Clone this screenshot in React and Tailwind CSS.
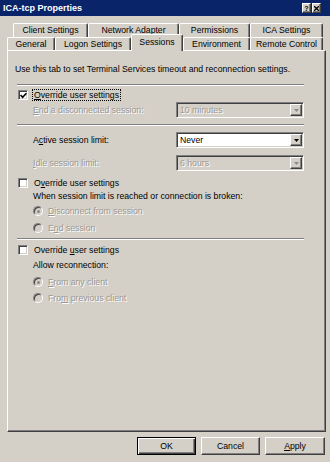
import React from "react";

const raised =
  "border border-t-white border-l-white border-r-[#404040] border-b-[#404040] shadow-[inset_-1px_-1px_0_#808080]";
const sunken =
  "border border-t-[#808080] border-l-[#808080] border-r-white border-b-white shadow-[inset_1px_1px_0_#404040,inset_-1px_-1px_0_#d4d0c8]";
const dim = "text-[#9a9894] [text-shadow:1px_1px_0_#ffffff]";

const K = ({ children }) => <span className="underline underline-offset-1">{children}</span>;

const Sep = ({ className = "" }) => (
  <div className={`h-[2px] border-t border-t-[#808080] border-b border-b-white ${className}`} />
);

const Check = ({ checked }) => (
  <div className={`flex h-[10px] w-[10px] items-center justify-center bg-white ${sunken}`}>
    {checked && (
      <svg width="7" height="7" viewBox="0 0 7 7">
        <polyline points="0.6,3 2.6,5.2 6.4,1.2" fill="none" stroke="#000" strokeWidth="1.6" />
      </svg>
    )}
  </div>
);

const Radio = ({ selected }) => (
  <div className="flex h-[10px] w-[10px] items-center justify-center rounded-full border border-t-[#808080] border-l-[#808080] border-r-white border-b-white bg-[#d4d0c8] shadow-[inset_1px_1px_0_#404040]">
    {selected && <div className="h-[3px] w-[3px] rounded-full bg-[#8a8a8a]" />}
  </div>
);

const Combo = ({ value, enabled }) => (
  <div className={`ml-auto flex h-[16px] w-[128px] items-stretch p-[1px] ${sunken} ${enabled ? "bg-white" : "bg-[#d4d0c8]"}`}>
    <span className={`flex flex-1 items-center pl-[2px] ${enabled ? "text-black" : dim}`}>{value}</span>
    <div className={`flex w-[12px] items-center justify-center bg-[#d4d0c8] ${raised}`}>
      <svg width="5" height="3" viewBox="0 0 5 3">
        <path d="M0 0h5L2.5 3z" fill={enabled ? "#000" : "#8a8a8a"} />
      </svg>
    </div>
  </div>
);

const backTabs = [
  { label: "Client Settings", w: "w-[75px]" },
  { label: "Network Adapter", w: "w-[91px]" },
  { label: "Permissions", w: "w-[71px]" },
  { label: "ICA Settings", w: "w-[73px]" },
];

const frontTabs = [
  { label: "General", w: "w-[48px]" },
  { label: "Logon Settings", w: "w-[76px]" },
  { label: "Sessions", w: "w-[52px]", active: true },
  { label: "Environment", w: "w-[67px]" },
  { label: "Remote Control", w: "w-[73px]" },
];

const tabBase =
  "flex items-center justify-center bg-[#d4d0c8] border-l border-t border-white border-r border-r-[#404040] rounded-t-[2px] shadow-[inset_-1px_0_0_#808080]";

export default function App() {
  return (
    <div className="h-[462px] w-[330px] overflow-hidden bg-[#d4d0c8] font-['Liberation_Sans',Arial,sans-serif] text-[8.7px] leading-none text-black">
      {/* Title bar */}
      <div className="flex h-[16px] items-center bg-[#0a246a] pl-[3px] pr-[9px]">
        <span className="text-[9px] font-bold text-white">ICA-tcp Properties</span>
        <div className="ml-auto flex gap-[1px]">
          <div className={`flex h-[10px] w-[9px] items-center justify-center bg-[#d4d0c8] ${raised}`}>
            <span className="text-[7px] font-bold">?</span>
          </div>
          <div className={`flex h-[10px] w-[9px] items-center justify-center bg-[#d4d0c8] ${raised}`}>
            <svg width="5" height="5" viewBox="0 0 5 5">
              <path d="M0 0L5 5M5 0L0 5" stroke="#000" strokeWidth="1.3" />
            </svg>
          </div>
        </div>
      </div>

      {/* Tabs */}
      <div className="mt-[7px] ml-[13px] flex h-[14px]">
        {backTabs.map((t) => (
          <div key={t.label} className={`${tabBase} ${t.w}`}>{t.label}</div>
        ))}
      </div>
      <div className="ml-[7px] flex h-[13px] items-end">
        {frontTabs.map((t) =>
          t.active ? (
            <div key={t.label} className={`${tabBase} ${t.w} relative z-10 -mb-[1px] h-[17px] pb-[2px]`}>
              {t.label}
            </div>
          ) : (
            <div key={t.label} className={`${tabBase} ${t.w} h-[13px]`}>{t.label}</div>
          )
        )}
      </div>

      {/* Panel */}
      <div className="ml-[7px] h-[382px] w-[319px] border-l border-t border-white border-r border-b border-r-[#404040] border-b-[#404040] shadow-[inset_-1px_-1px_0_#808080]">
        <div className="pl-[9px] pr-[21px] pt-[12px]">
          <div className="-ml-[2px] flex h-[12px] items-center">
            Use this tab to set Terminal Services timeout and reconnection settings.
          </div>
          <Sep className="mt-[9px]" />

          <div className="mt-[3px] flex h-[12px] items-center">
            <div className="ml-[1px]"><Check checked /></div>
            <span className="ml-[4px] border border-dotted border-black px-[1px] py-[1px]">
              <K>O</K>verride user settings
            </span>
          </div>
          <div className="mt-[1px] flex h-[16px] items-center pl-[16px]">
            <span className={dim}><K>E</K>nd a disconnected session:</span>
            <Combo value="10 minutes" />
          </div>
          <Sep className="mt-[6px]" />

          <div className="mt-[6px] flex h-[16px] items-center pl-[16px]">
            <span>A<K>c</K>tive session limit:</span>
            <Combo value="Never" enabled />
          </div>
          <div className="mt-[7px] flex h-[16px] items-center pl-[16px]">
            <span className={dim}><K>I</K>dle session limit:</span>
            <Combo value="6 hours" />
          </div>

          <div className="mt-[6px] flex h-[12px] items-center">
            <div className="ml-[1px]"><Check /></div>
            <span className="ml-[6px]">O<K>v</K>erride user settings</span>
          </div>
          <div className="mt-[1px] flex h-[12px] items-center pl-[16px]">
            When session limit is reached or connection is broken:
          </div>
          <div className="mt-[3px] flex h-[12px] items-center pl-[16px]">
            <Radio selected />
            <span className={`ml-[5px] ${dim}`}><K>D</K>isconnect from session</span>
          </div>
          <div className="mt-[5px] flex h-[12px] items-center pl-[16px]">
            <Radio />
            <span className={`ml-[5px] ${dim}`}>E<K>n</K>d session</span>
          </div>
          <Sep className="mt-[4px]" />

          <div className="mt-[4px] flex h-[12px] items-center">
            <div className="ml-[1px]"><Check /></div>
            <span className="ml-[6px]">Override <K>u</K>ser settings</span>
          </div>
          <div className="mt-[3px] flex h-[12px] items-center pl-[16px]">Allow reconnection:</div>
          <div className="mt-[5px] flex h-[12px] items-center pl-[16px]">
            <Radio selected />
            <span className={`ml-[5px] ${dim}`}><K>F</K>rom any client</span>
          </div>
          <div className="mt-[4px] flex h-[12px] items-center pl-[16px]">
            <Radio />
            <span className={`ml-[5px] ${dim}`}>Fro<K>m</K> previous client</span>
          </div>
        </div>
      </div>

      {/* Buttons */}
      <div className="mt-[5px] flex justify-end gap-[5px] pr-[5px]">
        <button className="flex h-[18px] w-[59px] items-center justify-center border border-black bg-[#d4d0c8] shadow-[inset_1px_1px_0_#fff,inset_-1px_-1px_0_#404040,inset_-2px_-2px_0_#808080]">
          OK
        </button>
        <button className={`flex h-[18px] w-[59px] items-center justify-center bg-[#d4d0c8] ${raised}`}>Cancel</button>
        <button className={`flex h-[18px] w-[60px] items-center justify-center bg-[#d4d0c8] ${raised}`}>
          <K>A</K>pply
        </button>
      </div>
    </div>
  );
}
